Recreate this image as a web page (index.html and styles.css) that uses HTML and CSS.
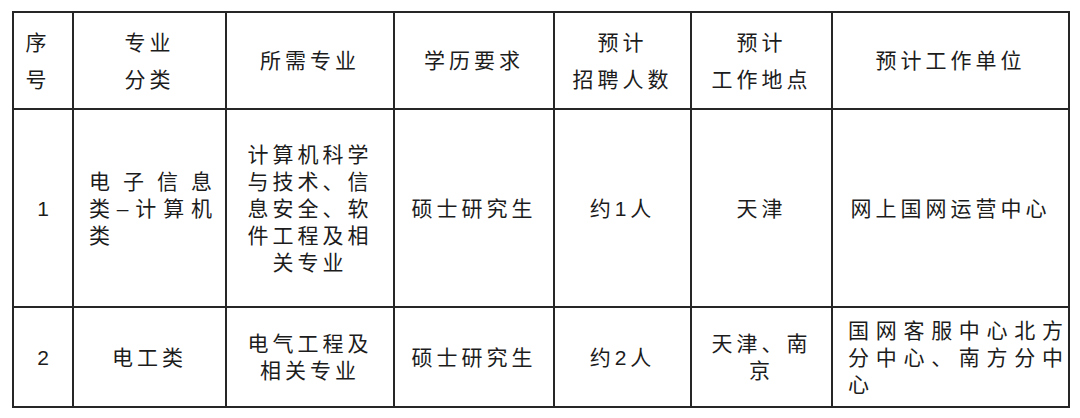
FILE: index.html
```html
<!DOCTYPE html>
<html lang="zh-CN">
<head>
<meta charset="utf-8">
<title>招聘岗位</title>
<link rel="stylesheet" href="styles.css">
</head>
<body>
<div class="page">
<table class="jobs">
  <colgroup>
    <col class="c1"><col class="c2"><col class="c3"><col class="c4"><col class="c5"><col class="c6"><col class="c7">
  </colgroup>
  <thead>
    <tr class="head">
      <th class="idx-h">序<br>号</th>
      <th>专业<br>分类</th>
      <th>所需专业</th>
      <th>学历要求</th>
      <th>预计<br>招聘人数</th>
      <th>预计<br>工作地点</th>
      <th>预计工作单位</th>
    </tr>
  </thead>
  <tbody>
    <tr class="r1">
      <td class="num">1</td>
      <td class="just">
        <div class="jl">电子信息</div>
        <div class="jl">类–计算机</div>
        <div class="ll">类</div>
      </td>
      <td>计算机科学<br>与技术、信<br>息安全、软<br>件工程及相<br>关专业</td>
      <td>硕士研究生</td>
      <td>约1人</td>
      <td>天津</td>
      <td>网上国网运营中心</td>
    </tr>
    <tr class="r2">
      <td class="num">2</td>
      <td>电工类</td>
      <td>电气工程及<br>相关专业</td>
      <td>硕士研究生</td>
      <td>约2人</td>
      <td>天津、南<br>京</td>
      <td class="just unit">
        <div class="jl">国网客服中心北方</div>
        <div class="jl">分中心、南方分中</div>
        <div class="ll">心</div>
      </td>
    </tr>
  </tbody>
</table>
</div>
</body>
</html>
```
FILE: styles.css
```css
html, body {
  margin: 0;
  padding: 0;
  background: #ffffff;
}

.page {
  padding: 11px 0 0 12px;
}

.jobs {
  border-collapse: collapse;
  table-layout: fixed;
  width: 1058px;
  font-family: "Liberation Sans", "Noto Sans CJK SC", sans-serif;
  font-size: 21px;
  letter-spacing: 4px;
  color: #1c1c1c;
}

.c1 { width: 60px; }
.c2 { width: 153px; }
.c3 { width: 168px; }
.c4 { width: 160px; }
.c5 { width: 137px; }
.c6 { width: 141px; }
.c7 { width: 237px; }

.jobs th,
.jobs td {
  border: 2px solid #262626;
  padding: 0 6px;
  text-align: center;
  vertical-align: middle;
  font-weight: 400;
}

.jobs th {
  line-height: 37px;
}

.jobs td {
  line-height: 27px;
}

.head { height: 97px; }
.r1 { height: 198px; }
.r2 { height: 100px; }

.jobs th.idx-h {
  padding: 0 12px 0 2px;
}

.jobs td.num {
  letter-spacing: 0;
}

.jobs td.just {
  padding: 0 13px 0 15px;
}

.jobs td.unit {
  padding: 0 5px 0 15px;
}

.jl {
  text-align: justify;
  text-align-last: justify;
  letter-spacing: 0;
}

.ll {
  text-align: left;
}
```
